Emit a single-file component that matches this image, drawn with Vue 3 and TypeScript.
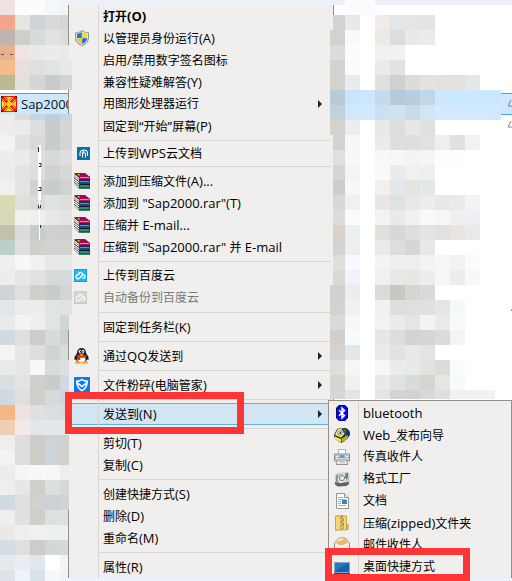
<script setup lang="ts">
interface Entry {
  label: string
  icon?: string
  bold?: boolean
  disabled?: boolean
  more?: boolean
  active?: boolean
}

const groups: Entry[][] = [
  [
    { label: '打开(O)', bold: true },
    { label: '以管理员身份运行(A)', icon: 'shield' },
    { label: '启用/禁用数字签名图标' },
    { label: '兼容性疑难解答(Y)' },
    { label: '用图形处理器运行', more: true },
    { label: '固定到“开始”屏幕(P)' },
  ],
  [{ label: '上传到WPS云文档', icon: 'wps' }],
  [
    { label: '添加到压缩文件(A)...', icon: 'rar' },
    { label: '添加到 "Sap2000.rar"(T)', icon: 'rar' },
    { label: '压缩并 E-mail...', icon: 'rar' },
    { label: '压缩到 "Sap2000.rar" 并 E-mail', icon: 'rar' },
  ],
  [
    { label: '上传到百度云', icon: 'cloud' },
    { label: '自动备份到百度云', icon: 'cloudoff', disabled: true },
  ],
  [{ label: '固定到任务栏(K)' }],
  [{ label: '通过QQ发送到', icon: 'qq', more: true }],
  [{ label: '文件粉碎(电脑管家)', icon: 'guard', more: true }],
  [{ label: '发送到(N)', more: true, active: true }],
  [{ label: '剪切(T)' }, { label: '复制(C)' }],
  [{ label: '创建快捷方式(S)' }, { label: '删除(D)' }, { label: '重命名(M)' }],
  [{ label: '属性(R)' }],
]

const targets: Entry[] = [
  { label: 'bluetooth', icon: 'bluetooth' },
  { label: 'Web_发布向导', icon: 'web' },
  { label: '传真收件人', icon: 'fax' },
  { label: '格式工厂', icon: 'factory' },
  { label: '文档', icon: 'document' },
  { label: '压缩(zipped)文件夹', icon: 'zip' },
  { label: '邮件收件人', icon: 'mail' },
  { label: '桌面快捷方式', icon: 'desktop' },
]

/* Splits a label into Latin and Chinese runs so that each gets its own size. */
function runs(text: string): { text: string; latin: boolean }[] {
  return text
    .split(/([\x20-\x7e“”]+)/)
    .filter((part) => part.length > 0)
    .map((part) => ({ text: part, latin: /^[\x20-\x7e“”]/.test(part) }))
}

/* Pixelated columns at the sides of the menu, one string of hex colours per row. */
const left = `efe2e0 fafcfe fafcfe f3f6fa f2f4f4
f6a48c e5e5e3 cfd3d5 d8dad8 d6d6d4
beb5b3 d0cecb d8dbdb e0e2e3 dcdcdb
e3b291 f0e5e4 e9e9e7 e9ebec e9e9e9
f6bb8b e9dfdd dfe0de dfe4e4 e8e8e6
bcbb90 e0e1dd d3d6d5 c7cbc9 d2d4d1
ffffff ffffff ffffff ffffff ffffff
efeeec ddddda c3d6e4 bbd0de c3d6e2
efedeb ebebea dcdfdf c8cccb d6d6d4
f4f3f1 e2e2e1 d8d9d8 c8cccb d5d5d3
ededed eaeaea dde0e0 d7dada dededd
ececeb e2e4e4 dcdfde cfd2d1 d8d8d6
f0f0ef e4e4e2 d2d1d0 c8cccb d2d2d0
dbdbb3 dfe0dd d8dbda dfe3e3 dededd
d7d7ba f1f1f0 efefee e8e8e7 e4e4e4
c2c2ac dbdcdb c8ccca cfd1d0 cfcfcd
bdcfca dedfde d0cfcc d0d3d2 d2d2cf
efefee f6f8f9 f0f2f2 e8e8e8 e6e8e9
ededec e6e7e7 e0e2e1 d8dbdb d3dbde
ccd4d7 dedfde d0cfcc c8cccb d5d5d3
e1e7e9 ececeb eceeee e2e4e3 e0e1e1
e9eae9 f1f3f4 efeeed dfe4e4 cfd5d9
d2dae1 dfdfdd cdccc8 d8dbda ccd1d4
f5f4f3 e6e6e5 dcdddc cfd5d7 dadcdb
e9eae9 e6e6e5 f8f7f5 d9dcdb dddfe0
dae0e2 dfe4e5 cfcfcd c8cdcb d2d7e2
d0d9e0 dfe0de d0cfcc d6dadb cdd6dd
f5b885 ede2e1 e2e0de d9dfdf d9dcdc
f1ceb5 f3e9e8 e3e7eb e3e8ec e3e8ec
eeeeec dedddb cdccc9 cdd4d7 d2d1ce
f3f3f1 dfdedc cdccc9 cdd4d7 d2d1ce
ececeb f4f5f6 f8f8f7 f4f6f7 ecedee
eeeeec e8e7e5 cfcecb dae0e0 d9d8d6
d0dae1 dfdfde d2d0cd cbd2d7 d2d3d4
eeefed dfe0df cfcecb dae1e0 dee0e1
e9e9e7 eeefee f0f0ef eeeff0 eeefef
d4dde4 dfdfde cdccc9 d2d7d9 d5d9da
e6eaea e9ecf1 e1e7ea ffffff f4f4f2
dde3e8 edf3fa d9e1eb f6f9fc edf3fa`
  .split('\n')
  .map((row) => row.split(' ').map((c) => '#' + c))

const right = `edf1fa f9fbfd f9fbfd
d4d2cf e9e9e9 ffffff f0ebe8 e1e6e8 e6e6e4 e3e5e4
d4d2cf f8fafa ffffff ebebe6 dcdedd e9e9e8 ebebea
dedcdb fcfcfc ffffff f0f0ee f1f1f1
d4d2cf fafcfb ffffff eaeae9 e2e2e1
d4d2cf e9ebec ffffff e0dfda cfd1d0 dcdcda e3e2e1 e1e1e0 e5e0dc e6e7e8
b8cbd6 cae5fb cce8ff c4dbef b5cbdb b7cee0 bfd7e8 cce8ff cce8ff cce8ff cce8ff cae7fe
c2d1da d2e8fa d2eaff cbe1f0 cde3f2 c8dbea d0e6f7 d3eafd d3eafd d3eafd d3eafd d0e8fc
d4d2cf ebeeee ffffff e9e8e4 dcdedd e8e7e4 dfe0e0
d2d2cf f6f9f8 ffffff ebebe9 dededc dededc e1e2e2 efeeec e0e0e0 f0f3f2
e0dfde f6f9f8 ffffff f9f8f6 f5f8f7 f2f3f4 f5f5f5 fdfdfd fdfdfd
d6d5d3 f4f4f4 ffffff faf9f7 e9ebee f1f0ed edf0ef
cfcdca f7f7f7 ffffff f4efeb e3e8ea e5e4e0 e3e8ea
d9d8d7 f0f0f1 ffffff e9e7e5 dee2e1 e8e8e6 eeedeb e8e8e6 ebeae8 f2f4f4
dddcda fbfbfb ffffff f4f3f0 e7eae9 f0f1f2 f9f9f9 f6f6f6 f1efed edeff2
d7d3cc eaf0f2 ffffff e0dfda d5d9d7 dededd e5e4e2 e1e1df e8e4e2 e9ebea
d3d3cf edefee ffffff ebeae8 dcdddd d7d6d5 e8e8e8
dfdeda f7fafe ffffff f4f3f1 efefef eeeeee f3f3f4 f6f6f5 f1f2f2 f9fcfb
dbd9d5 f0f3f7 ffffff f0f0ee e8e8e6 e7e7e4 ededed f8f6f4 ededed f8f8f8
d1d1cf ededed ffffff dadcd6 c7c7c6 d8d6d2 d6dada
d3d2cf f0f1f1 ffffff f0f0ee dededc dfdfde e1e0df e5e5e3 f6f9fb
dbd9d7 f7f7f7 ffffff f2f2ef e9ecec e5e5e5 f3f3f3 ebeae8 f8fafa
d3cec9 f6fbff ffffff e8e6e4 dcddde d5d3d0 d5d5d3 dddbd8 f3f4f7
d3d4d2 e4e8e8 ffffff ebeae8 e1e2e1 e8e8e5 e0e4e4
dededb f4f7f5 ffffff f7f6f2 ebebea e7eae7 e2e2df dedcd9 f9fcfc
d3d6d1 f0f2f0 ffffff eae9e5 dfe2e0 d6dcd8 d6d5cf e3e6e5 f7fafa
d7d6d5 e4e4e4 ffffff e4e4e4 d3d3d3 d2d2d2 d6d8d9 dfdfdf f0f0f0 f1f1f1 f1f1f1`
  .split('\n')
  .map((row) => row.split(' ').map((c) => '#' + c))

/* Rows whose edge reaches over the menu, or stops short of its border. */
function leftEdge(row: number): string {
  if ((row > 3 && row < 6) || (row > 6 && row < 21)) return 'wide'
  if (row < 3 || row === 22 || row === 23 || row > 33) return 'short'
  return ''
}
function rightEdge(row: number): string {
  return (row > 8 && row < 19) || row === 1 ? 'inset' : ''
}
</script>

<template>
  <main class="page">
    <svg class="defs" aria-hidden="true">
      <symbol id="shield" viewBox="0 0 16 16">
        <path d="M8 0 10 1.400 15 2.600V8c0 3.800-3 6.500-7 8-4-1.500-7-4.200-7-8V2.600L6 1.400Z" fill="#8f9599" />
        <path d="M8 1.200 10 2.300 14 3.300V8c0 3.200-2.500 5.500-6 7-3.500-1.500-6-3.800-6-7V3.300l4-1Z" fill="#dfe4e6" />
        <path d="M7.800 2.300 3 4v4h4.800Z" fill="#2079c9" />
        <path d="M8.200 2.300 13 4v4H8.200Z" fill="#fcd633" />
        <path d="M3 8.200h4.800V14C5 12.600 3 10.800 3 8.200Z" fill="#f6c52a" />
        <path d="M13 8.200H8.200V14c2.800-1.400 4.800-3.200 4.800-5.800Z" fill="#1b6fc1" />
      </symbol>
      <symbol id="wps" viewBox="0 0 16 16">
        <path d="M3 1h13v13H3Z" fill="#0871a5" />
        <path d="M6 10V7.500C6.200 5 8 4 10 4c2.200 0 3.500 1.200 3.500 3.500V10M8.500 11.500V8c0-1.500.5-2.500 1.800-3M8.500 7c2-.8 3 0 3 1.500v3" fill="none" stroke="#fff" stroke-width="1.100" />
      </symbol>
      <symbol id="rar" viewBox="0 0 16 16">
        <path d="M0 .5h11l5 4v11H5L0 11Z" fill="#1c1218" />
        <path d="M1 0h10l5 4H5Z" fill="#96104c" />
        <path d="M3 1h2.500v2H5Z" fill="#e9c21d" />
        <path d="M5 3.500h11v3H5Z" fill="#b80f5c" />
        <path d="M6 4.500h9" stroke="#f57fb8" />
        <path d="M5 7.500h11v3.500H5Z" fill="#0a4f94" />
        <path d="M6 8.500h9" stroke="#3aa5e6" />
        <path d="M5 12h11v3.500H5Z" fill="#06664a" />
        <path d="M6 13h9" stroke="#2fcb97" />
        <path d="M0 1.500 5 5.500M0 3.500 5 7.500M0 6 5 9.800M0 8 5 12M0 10.200 5 14.200" fill="none" stroke="#f4f2f2" stroke-width="1.200" />
      </symbol>
      <symbol id="cloud" viewBox="0 0 16 16">
        <path d="M0 1h13v13H0Z" fill="#1899dd" />
        <path d="M1 2h11v11H1Z" fill="#1bbdf3" />
        <path d="M5.500 6.500C4 6 2 7 2 8.800 2 11 5 11.500 6.200 9.500L8 7.500c1.500-1.500 3.500-.3 3 1.500-.3 1.300-1.800 1.500-2.600.6M4.500 6.500C4.500 4 8 3.500 8.500 6.500" fill="none" stroke="#fff" stroke-width="1.400" />
      </symbol>
      <symbol id="cloudoff" viewBox="0 0 16 16">
        <path d="M0 1h13v13H0Z" fill="#cbcac7" />
        <path d="M1 2h11v11H1Z" fill="#d6d5d2" />
        <path d="M5.500 6.500C4 6 2 7 2 8.800 2 11 5 11.500 6.200 9.500L8 7.500c1.500-1.500 3.500-.3 3 1.500-.3 1.300-1.800 1.500-2.600.6M4.500 6.500C4.500 4 8 3.500 8.500 6.500" fill="none" stroke="#f5f4f2" stroke-width="1.400" />
      </symbol>
      <symbol id="qq" viewBox="0 0 16 16">
        <path d="M7.500 0C4.500 0 3 2 3 5L.5 9v3l1.500-.5L4 15h7l2-3.500 1.500.5V9L12 5c0-3-1.500-5-4.500-5Z" fill="#1d1d1f" />
        <ellipse cx="7.500" cy="11" rx="4" ry="3.800" fill="#fff" />
        <ellipse cx="5.900" cy="3.300" rx="1.300" ry="1.600" fill="#fff" />
        <ellipse cx="9.100" cy="3.300" rx="1.300" ry="1.600" fill="#fff" />
        <path d="M6 3h1v1H6zM8.500 3h1v1h-1z" fill="#111" />
        <path d="M4.500 5.500h6L7.500 7.200Z" fill="#f9ad19" />
        <path d="M2.800 6.500c3 1.800 6.500 1.800 9.500 0V9C10 10 8 10 6.300 9.700V12H4V9L2.800 8.500Z" fill="#e52b20" />
        <ellipse cx="4" cy="14.600" rx="3.200" ry="1.400" fill="#f7a827" />
        <ellipse cx="11" cy="14.600" rx="3.200" ry="1.400" fill="#f7a827" />
      </symbol>
      <symbol id="guard" viewBox="0 0 16 16">
        <rect width="16" height="16" rx="1" fill="#0c79f2" />
        <path d="M2 3.500C5 3.500 6.500 2.500 8 1.500c1.500 1 3 2 6 2 0 5-1.500 8.500-6 11-4.500-2.500-6-6-6-11Z" fill="#fff" />
        <path d="M3.500 5C6 4.800 7 4 8 3.300c1 .7 2 1.500 4.500 1.700L8 8.500Z" fill="#0c79f2" />
        <path d="M4 7.500 8 10.500l4-3c-.5 2.300-1.800 4-4 5.300-2.200-1.300-3.500-3-4-5.300Z" fill="#0c79f2" />
      </symbol>
      <symbol id="bluetooth" viewBox="0 0 16 16">
        <path d="M5 0h6l3 3v10l-3 3H5l-3-3V3Z" fill="#020270" />
        <path d="M5.500 1h5L13 3.500v9L10.500 15h-5L3 12.500v-9Z" fill="#0808ee" />
        <path d="M5 5.200 10.500 10.500 8 13V3l2.500 2.500L5 10.800" fill="none" stroke="#fff" stroke-width="1.500" />
      </symbol>
      <symbol id="web" viewBox="0 0 16 16">
        <circle cx="10.500" cy="6.500" r="5" fill="#13803c" stroke="#111" />
        <path d="M12 3c3 1 4 5 2 8l-2-2Z" fill="#17268f" />
        <path d="M0 8 3 2l4-1 4 6v7l-4 2-6-4Z" fill="#312f15" />
        <path d="M1 8 3.500 2.500 7 1.500l3.500 5.500L7 10.500Z" fill="#f1eea8" />
        <path d="M1 9.500l6 2.500v3.500l-6-3Z" fill="#efe552" />
        <path d="M7.500 11.500 14 8v4l-6.500 3.500Z" fill="#b9a92b" />
        <circle cx="6" cy="6" r="2.200" fill="#fff" stroke="#8b8620" />
        <path d="M5.500 5h1.500v2H5.500Z" fill="#263ba0" />
      </symbol>
      <symbol id="fax" viewBox="0 0 16 16">
        <path d="M4.500.5h7v5h-7Z" fill="#fff" stroke="#b0b5b9" />
        <path d="M.5 5h15v7H.5Z" fill="#d6dbdf" stroke="#858b90" />
        <path d="M1.500 6.500h3v4h-3ZM11.500 6.500h3v4h-3Z" fill="#9da3a7" />
        <path d="M2 7.500h2M2 9.500h2M12 7.500h2M12 9.500h2" stroke="#fff" />
        <path d="M5.500 6h5v3h-5Z" fill="#4aa8dc" />
        <path d="M3.500 11h9l1 4.500h-11Z" fill="#fff" stroke="#8d9296" />
        <path d="M5 12.500h6M4.500 14h7" stroke="#b7bcc0" />
      </symbol>
      <symbol id="factory" viewBox="0 0 16 16">
        <path d="M1 4 4 2l10-1 1.500 2v10L13 15l-10 .5L.5 13Z" fill="#c9ced1" />
        <path d="M1 11l5 1 9-1v2l-3 2-8 .5-3-2Z" fill="#5c6366" />
        <path d="M2 4.500 4 3v7l-2 1.500Z" fill="#8a9297" />
        <path d="M4 9 11 3M6 12l7-5" stroke="#f7f9fa" stroke-width="1.500" />
        <circle cx="8" cy="7" r="2.600" fill="#e9eef2" stroke="#778087" />
        <path d="M11 2.500 14 2v5l-2 2Z" fill="#71797e" />
        <path d="M11.500 5h1v2h-1Z" fill="#2a84c6" />
      </symbol>
      <symbol id="document" viewBox="0 0 16 16">
        <path d="M2.500.5h8l4 4v11h-12Z" fill="#fff" stroke="#929697" />
        <path d="M10.500.5v4h4" fill="#e8eaea" stroke="#929697" />
        <path d="M4 4.500h5M4 6.500h8M4 8.500h3M4 10.500h3M4 12.500h8" stroke="#9bafbc" />
        <path d="M8 7h5v4H8Z" fill="#328bce" />
        <path d="M8 9.500h5V11H8Z" fill="#2f8c76" />
      </symbol>
      <symbol id="zip" viewBox="0 0 16 16">
        <path d="M1 1 5 0v15l-4 1Z" fill="#d8a941" />
        <path d="M1.500 1h11v14h-11Z" fill="#f6d778" stroke="#d3a640" />
        <path d="M13 9h1.500v6H13Z" fill="#d9a03b" />
        <path d="M6 0h4v15H6Z" fill="#e2c263" />
        <path d="M7 1h2M6 3h2M8 5h2M6 7h2M8 9h2" stroke="#7e6a37" stroke-width="1.200" />
        <path d="M7 10h2v4H7Z" fill="#f9f2dc" stroke="#857552" stroke-width=".7" />
      </symbol>
      <symbol id="mail" viewBox="0 0 16 16">
        <path d="M.5 6 5 1h6l4.500 5v9.500H.5Z" fill="#eef4f7" stroke="#84929a" />
        <path d="M1.500 5.500 5 2h6l3 4-5 2H5Z" fill="#f0b45c" />
        <path d="M2 5 5 1.500l6 .5Z" fill="#fff0b0" />
        <path d="M1 7l7 4.500L15 7v8H1Z" fill="#dcebf3" />
      </symbol>
      <symbol id="desktop" viewBox="0 0 16 16">
        <path d="M0 3h16v11H0Z" fill="#8aa4bb" />
        <path d="M1 4h14v9H1Z" fill="#1461b0" />
        <path d="M1 4h14L4 10 1 12Z" fill="#2878c4" />
        <path d="M0 14h16v1.500H0Z" fill="#333f4b" />
      </symbol>
      <symbol id="sap" viewBox="0 0 16 16">
        <path d="M0 0h16v16H0Z" fill="#fb1205" />
        <path d="M4 1h8L8 4ZM4 15h8l-4-3ZM1 4v8l3-4ZM15 4v8l-3-4Z" fill="#ffe51e" />
        <path d="M3 2l5 3 5-3M3 14l5-3 5 3M2 3l3 5-3 5M14 3l-3 5 3 5" fill="none" stroke="#fff45c" />
        <path d="M8 4l2 2 2 2-2 2-2 2-2-2-2-2 2-2Z" fill="#ffbd0d" />
        <path d="M1 1l14 14M15 1 1 15" stroke="#ef1605" stroke-width="1.500" />
        <path d="M6 6h4v4H6Z" fill="#ffd21e" />
        <path d="M0 0h2v1H1v1H0ZM14 0h2v2h-1V1h-1ZM0 14h1v1h1v1H0ZM15 14h1v2h-2v-1h1Z" fill="#59140e" />
      </symbol>
    </svg>

    <div class="strip top"></div>
    <div class="strip bottom"></div>
    <a class="file" href="#sap2000">
      <svg class="icon"><use href="#sap" /></svg>
      <span>Sap2000</span>
    </a>
    <svg class="marks" viewBox="0 0 4 220" aria-hidden="true">
      <path d="M3 7 0 13h4M3 28 0 34h4" fill="none" stroke="#8b8378" />
      <path d="M3 218 4 216" stroke="#b97743" />
    </svg>

    <div class="mosaic left">
      <div v-for="(row, r) in left" :key="r" class="cells" :class="leftEdge(r)">
        <i v-for="(color, c) in row" :key="c" :style="{ backgroundColor: color }"></i>
      </div>
      <svg class="scraps" viewBox="0 0 42 240" aria-hidden="true">
        <path d="M38 145h3v55h-1v40h-1v-40h-1Z" fill="#fff" />
        <path d="M38.500 147v5M39 163.500h2v3h-2M39 187.500h2v3h-3M38.500 205v3h2v-3M40.500 225v3" fill="none" stroke="#26313c" />
        <path d="M1 54.500h3M10 54.500h3" stroke="#c1272d" />
      </svg>
    </div>

    <div class="mosaic right">
      <div v-for="(row, r) in right" :key="r" class="cells" :class="rightEdge(r)">
        <i v-for="(color, c) in row" :key="c" :style="{ backgroundColor: color }"></i>
      </div>
    </div>

    <nav class="menu main">
      <div v-for="(group, g) in groups" :key="g" class="group" :class="{ tight: g === 1 }">
        <button
          v-for="item in group"
          :key="item.label"
          type="button"
          class="item"
          :class="{ bold: item.bold, active: item.active }"
          :disabled="item.disabled"
        >
          <span class="gutter">
            <svg v-if="item.icon" class="icon"><use :href="'#' + item.icon" /></svg>
          </span>
          <span class="label"><span v-for="(run, i) in runs(item.label)" :key="i" :class="{ latin: run.latin }">{{ run.text }}</span></span>
          <span v-if="item.more" class="arrow"></span>
        </button>
      </div>
    </nav>

    <nav class="menu sub">
      <button v-for="item in targets" :key="item.label" type="button" class="item">
        <span class="gutter">
          <svg class="icon"><use :href="'#' + item.icon" /></svg>
        </span>
        <span class="label"><span v-for="(run, i) in runs(item.label)" :key="i" :class="{ latin: run.latin }">{{ run.text }}</span></span>
      </button>
    </nav>

    <div class="callout send"></div>
    <div class="callout shortcut"></div>
  </main>
</template>

<style>
body {
  margin: 0;
  background: #fff;
}
</style>

<style scoped>
.page {
  position: relative;
  display: flex;
  justify-content: space-between;
  align-items: flex-start;
  overflow: hidden;
  font-family: "Open Sans", "Noto Sans CJK SC", sans-serif;
  font-size: 12px;
  color: #000;
}
.defs {
  position: absolute;
  width: 0;
  height: 0;
}
.icon {
  display: block;
  flex: none;
  width: 16px;
  height: 16px;
}
.strip {
  position: absolute;
  left: 0;
  right: 0;
}
.strip.top {
  top: 0;
  height: 5px;
  background: #edf1fa;
}
.strip.bottom {
  bottom: 0;
  height: 3px;
  background: #edf3fa;
}
.file {
  position: absolute;
  top: 93px;
  left: 0;
  right: 0;
  z-index: 1;
  display: flex;
  align-items: center;
  gap: 4px;
  box-sizing: border-box;
  height: 22px;
  padding-left: 1px;
  border: solid #49a5e4;
  border-width: 1px 0;
  background: #cce8ff;
  color: #111;
  font-size: 13px;
  text-decoration: none;
}
.marks {
  position: absolute;
  top: 93px;
  right: 0;
  z-index: 2;
  width: 4px;
  height: 220px;
}
.mosaic {
  position: relative;
  flex: none;
}
.mosaic.left {
  width: 72px;
}
.mosaic.right {
  width: 182px;
  z-index: 4;
}
.cells {
  display: flex;
  height: 15px;
}
.cells i {
  flex: none;
  width: 15px;
}
.left .cells {
  position: relative;
  z-index: 4;
}
.left .cells:nth-child(7) {
  visibility: hidden;
}
.left .cells:nth-child(8) {
  height: 6px;
  padding-top: 9px;
}
.left .cells:nth-child(39) {
  height: 11px;
}
.left .cells i:last-child {
  width: 9px;
}
.left .wide i:last-child {
  width: 12px;
}
.left .short i:last-child {
  width: 8px;
}
.right .cells:nth-child(1) i:first-child {
  visibility: hidden;
}
.right .cells:nth-child(7) i:last-child,
.right .cells:nth-child(8) i:last-child {
  width: 6px;
}
.right .cells:last-child {
  height: 9px;
}
.right .inset i:first-child {
  width: 12px;
  margin-left: 3px;
}
.scraps {
  position: absolute;
  top: 0;
  left: 0;
  z-index: 5;
  width: 42px;
  height: 240px;
}
.menu {
  position: absolute;
  box-sizing: border-box;
  border: 0 solid #928e8a;
  background: #f0efee;
}
.main {
  top: 5px;
  left: 68px;
  z-index: 3;
  width: 266px;
  border-width: 0 1px;
}
.sub {
  top: 400px;
  left: 328px;
  right: 0;
  z-index: 5;
  padding-top: 1px;
  border-width: 1px 1px 0;
}
.group + .group::before {
  content: "";
  display: block;
  box-sizing: border-box;
  height: 7px;
  margin: 0 2px 0 29px;
  border-left: 1px solid #d7d6d3;
  background: linear-gradient(#d7d6d3, #d7d6d3) 0 3px / 100% 1px no-repeat;
}
.item {
  display: flex;
  align-items: center;
  box-sizing: border-box;
  width: 100%;
  height: 22px;
  padding: 0 11px 0 0;
  border: 0;
  background: none;
  color: inherit;
  font: inherit;
  text-align: left;
}
.tight .item {
  height: 19px;
}
.item:disabled {
  color: #7b7a79;
}
.bold {
  font-weight: 700;
}
.active {
  background: #d1e5f2;
  box-shadow: inset 0 1px #63b1e3, inset 0 -1px #63b1e3;
}
.gutter {
  flex: none;
  box-sizing: border-box;
  width: 29px;
  padding-left: 5px;
}
.label {
  flex: 1;
  align-self: stretch;
  padding-left: 4px;
  border-left: 1px solid #d7d6d3;
  line-height: 22px;
  white-space: pre;
}
.tight .label {
  line-height: 19px;
}
.latin {
  font-size: 13px;
}
.arrow {
  border: solid transparent;
  border-width: 4px 0 4px 4px;
  border-left-color: #222;
}
.callout {
  position: absolute;
  z-index: 6;
  box-sizing: border-box;
  border: 7px solid #fd3535;
  pointer-events: none;
}
.send {
  top: 392px;
  left: 65px;
  width: 179px;
  height: 42px;
}
.shortcut {
  top: 548px;
  left: 325px;
  width: 145px;
  height: 33px;
}
</style>
